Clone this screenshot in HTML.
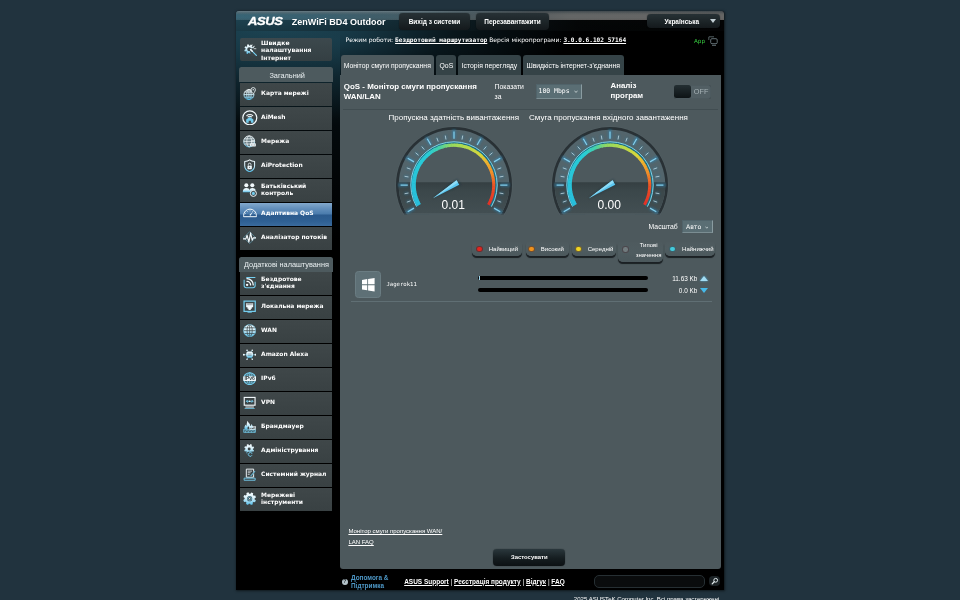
<!DOCTYPE html>
<html lang="uk"><head><meta charset="utf-8"><title>ASUS Wireless Router ZenWiFi BD4 Outdoor - Монітор смуги пропускання</title>
<style>
html,body{margin:0;padding:0;}
body{width:960px;height:600px;overflow:hidden;background:#21333e;position:relative;font-family:"Liberation Sans",sans-serif;color:#fff;}
*{box-sizing:border-box;}
.abs{position:absolute;}
#shadow{position:absolute;left:236px;top:11px;width:488px;height:578.5px;border-radius:3px 3px 0 0;box-shadow:0.6px 0.8px 2.5px rgba(0,0,0,.55);}
#wrap{will-change:transform;position:absolute;left:236px;top:11px;width:488px;height:578.5px;background:#000;border-radius:3px 3px 0 0;overflow:hidden;}
#glow{position:absolute;left:0;top:0;width:488px;height:200px;background:radial-gradient(ellipse 300px 95px at 40px 14px,rgba(34,80,98,.95) 0%,rgba(27,66,82,.8) 30%,rgba(17,44,55,.5) 60%,rgba(0,0,0,0) 100%);}
#glow2{position:absolute;left:0;top:0;width:104px;height:230px;background:linear-gradient(180deg,rgba(26,62,76,.0) 0%,rgba(26,62,76,.75) 12%,rgba(20,50,62,.55) 28%,rgba(12,32,40,.3) 50%,rgba(0,0,0,0) 100%);}
#hdr{position:absolute;left:0;top:0;width:488px;height:20px;background:linear-gradient(90deg,rgba(40,90,109,.97) 0%,rgba(33,76,93,.94) 20%,rgba(24,54,66,.92) 38%,rgba(12,24,29,.95) 55%,#06090a 70%,#040506 100%);}
#gloss{position:absolute;left:0;top:0;width:488px;height:9.2px;background:linear-gradient(90deg,rgba(130,150,158,.18) 0%,rgba(130,150,158,.26) 18%,rgba(125,142,148,.40) 32%,rgba(110,118,121,.7) 55%,rgba(108,110,110,.92) 68%,rgba(106,106,105,.95) 100%);}
#gloss2{position:absolute;left:0;top:0;width:488px;height:20px;background:linear-gradient(180deg,rgba(40,54,62,.6) 0%,rgba(40,54,62,.15) 12%,rgba(0,0,0,0) 20%,rgba(0,0,0,0) 34%,rgba(50,30,20,.12) 46%,rgba(0,0,0,.28) 46.5%,rgba(0,0,0,.36) 100%);}
#hdrtop{position:absolute;left:0;top:0;width:300px;height:3.5px;background:linear-gradient(180deg,rgba(120,138,146,.8) 0%,rgba(100,120,128,.5) 45%,rgba(40,60,70,0) 100%);-webkit-mask-image:linear-gradient(90deg,#000 0%,#000 60%,transparent 100%);}
.tbtn{position:absolute;top:2.2px;height:16.8px;border-radius:4px;background:linear-gradient(180deg,#273135 0%,#1c2427 55%,#14191c 100%);box-shadow:0 0 1px rgba(0,0,0,.8);font-weight:bold;font-size:6.47px;line-height:18.2px;text-align:center;color:#fff;white-space:nowrap;}
.menuhead{position:absolute;left:3px;width:94px;background:#4d5a5e;border-radius:2.5px 2.5px 0 0;color:#e9eff1;font-size:7.3px;text-align:center;white-space:nowrap;}
.mitem{position:absolute;left:3.7px;width:92.4px;height:22.9px;background:linear-gradient(180deg,#3f4749 0%,#394143 100%);font-family:"DejaVu Sans","Liberation Sans",sans-serif;font-weight:bold;font-size:5.95px;line-height:7.3px;color:#fff;display:flex;align-items:center;padding-left:21.4px;padding-bottom:2.6px;white-space:nowrap;}
.mitem.sel{background:linear-gradient(180deg,#83a9cd 0%,#6591bd 22%,#4a7bac 48%,#2b5a8d 52%,#2f6093 80%,#3a6b9e 100%);}
.mitem svg.mi{position:absolute;}
.tab{position:absolute;top:43.7px;height:20.3px;background:#354347;border-radius:3px 3px 0 0;font-size:6.83px;line-height:21.3px;text-align:center;color:#fff;white-space:nowrap;}
.tab.on{background:#4d595d;}
#panel{position:absolute;left:104.2px;top:63.8px;width:381.3px;height:493.8px;background:#4d595d;border-radius:0 0 3px 3px;}
.gauge{position:absolute;}
.gt{position:absolute;font-size:8px;color:#fff;white-space:nowrap;text-align:center;}
.sel{}
.sbox{position:absolute;background:#5a6e74;border-right:0.8px solid #8a9ca1;border-bottom:0.8px solid #7b8d92;border-top:0.5px solid #50636a;border-left:0.5px solid #50636a;color:#fff;white-space:nowrap;}
.chev{position:absolute;}
.lg{position:absolute;height:14.2px;border-radius:3px 3px 5px 5px;background:linear-gradient(180deg,#4e5a5e 0%,#4f5c60 50%,#4b585c 100%);box-shadow:0 1.6px 0.8px -0.4px rgba(24,30,33,.95);font-size:6px;line-height:14.6px;color:#fff;white-space:nowrap;}
.lg i{position:absolute;left:4px;top:4.1px;width:6.6px;height:6.6px;margin-left:-0.2px;border-radius:50%;border:0.5px solid rgba(60,50,55,.7);}
.lg span{position:absolute;top:0;}
a{color:#fff;text-decoration:underline;text-decoration-thickness:0.5px;text-underline-offset:0.5px;}
.mono{font-family:"DejaVu Sans Mono","Liberation Mono",monospace;}
.dv{font-family:"DejaVu Sans","Liberation Sans",sans-serif;}
</style></head><body>
<svg width="0" height="0" style="position:absolute"><defs><linearGradient id="ig" x1="0" y1="0" x2="0" y2="1"><stop offset="0" stop-color="#f6fcfe"/><stop offset="0.45" stop-color="#d8f0f9"/><stop offset="1" stop-color="#55bde8"/></linearGradient></defs></svg>
<div id="shadow"></div>
<div id="wrap">
<div id="glow"></div><div id="glow2"></div>
<div id="hdr"></div><div id="gloss"></div><div id="gloss2"></div><div id="hdrtop"></div>

<div class="abs" style="left:12.4px;top:5.2px;font-weight:bold;font-style:italic;font-size:10.4px;letter-spacing:-0.35px;line-height:10px;color:#fff;-webkit-text-stroke:0.3px #fff;transform:scale(1.255,1.1);transform-origin:left top">ASUS</div>
<div class="abs" style="left:55.8px;top:5.7px;font-weight:bold;font-size:9.04px;line-height:11px;white-space:nowrap;color:#fff">ZenWiFi BD4 Outdoor</div>
<div class="tbtn" style="left:162.8px;width:71.4px">Вихід з системи</div>
<div class="tbtn" style="left:239.8px;width:73.4px">Перезавантажити</div>
<div class="tbtn" style="left:410.8px;top:3.4px;height:14px;line-height:15.8px;width:73.4px;text-align:left;padding-left:17.6px">Українська<span style="position:absolute;right:3.8px;top:5px;width:0;height:0;border-left:3.4px solid transparent;border-right:3.4px solid transparent;border-top:4.2px solid #c3d0d5"></span></div>
<div class="mitem" style="top:26.8px;height:23.2px;border-radius:2px;font-size:6px;line-height:7.4px;padding-top:1.2px;padding-bottom:0;background:linear-gradient(180deg,rgba(62,73,77,.95),rgba(54,64,67,.95))"><svg class="mi" style="left:3.95px;top:5.55px" width="13.3" height="13.3" viewBox="0 0 28 28"><path d="M18.35,14.49 L21.00,16.20 L19.42,19.27 L16.49,18.11 L15.14,19.25 L15.81,22.34 L12.52,23.39 L11.27,20.50 L9.51,20.35 L7.80,23.00 L4.73,21.42 L5.89,18.49 L4.75,17.14 L1.66,17.81 L0.61,14.52 L3.50,13.27 L3.65,11.51 L1.00,9.80 L2.58,6.73 L5.51,7.89 L6.86,6.75 L6.19,3.66 L9.48,2.61 L10.73,5.50 L12.49,5.65 L14.20,3.00 L17.27,4.58 L16.11,7.51 L17.25,8.86 L20.34,8.19 L21.39,11.48 L18.50,12.73Z M6.80,13.00 a4.2,4.2 0 1 0 8.4,0 a4.2,4.2 0 1 0 -8.4,0Z" fill="url(#ig)" fill-rule="evenodd"/><polygon points="12,12 28,9 28,28 14,28" fill="#3b4548"/><line x1="14" y1="14" x2="26" y2="26" stroke="#74cdee" stroke-width="2.6" stroke-linecap="round"/><line x1="14" y1="14" x2="17.5" y2="17.5" stroke="#f2f9fc" stroke-width="3.2" stroke-linecap="round"/><path d="M19,8 l3,-1 M21,12 l4,0 M16,6.5 l1,-2.5" stroke="#f2f9fc" stroke-width="1.5" stroke-linecap="round"/></svg>Швидке<br>налаштування<br>Інтернет</div>
<div class="menuhead" style="top:56.2px;height:15.2px;line-height:18px;font-size:7.36px;padding-left:2.4px">Загальний</div>
<div class="mitem" style="top:71.7px"><svg class="mi" style="left:3.45px;top:3.85px" width="13.3" height="13.3" viewBox="0 0 28 28"><g fill="none" stroke="url(#ig)" stroke-width="1.9"><circle cx="12.5" cy="16" r="10.5"/><ellipse cx="12.5" cy="16" rx="4.6" ry="10.5"/><path d="M2,16 H23 M3.6,10.6 H21.4 M3.6,21.4 H21.4 M12.5,5.5 V26.5"/></g><path d="M21.5,1.2 a4.6,4.6 0 0 1 4.6,4.6 c0,3.4 -4.6,8.4 -4.6,8.4 c0,0 -4.6,-5 -4.6,-8.4 a4.6,4.6 0 0 1 4.6,-4.6Z" fill="#3b4548" stroke="#f2f9fc" stroke-width="1.8"/><circle cx="21.5" cy="5.8" r="1.4" fill="#f2f9fc"/></svg>Карта мережі</div>
<div class="mitem" style="top:95.7px"><svg class="mi" style="left:2.30px;top:3.20px" width="15.6" height="15.6" viewBox="0 0 28 28"><circle cx="14" cy="14" r="12.6" fill="none" stroke="#f2f9fc" stroke-width="2.2"/><path d="M7.5,23 V17 L14,12.5 L20.5,17 V23 H16 V19.5 H12 V23Z" fill="#74cdee"/><path d="M8.6,10.2 a7.6,7.6 0 0 1 10.8,0 M10.8,12.4 a4.5,4.5 0 0 1 6.4,0" fill="none" stroke="#f2f9fc" stroke-width="1.8" stroke-linecap="round"/></svg>AiMesh</div>
<div class="mitem" style="top:119.7px"><svg class="mi" style="left:3.45px;top:4.35px" width="13.3" height="13.3" viewBox="0 0 28 28"><circle cx="13" cy="13.5" r="11.6" fill="#bfe6f5" fill-opacity="0.35" stroke="url(#ig)" stroke-width="1.9"/><g fill="none" stroke="#f2f9fc" stroke-width="1.5"><ellipse cx="13" cy="13.5" rx="5" ry="11.6"/><path d="M1.6,13.5 H24.4 M3.2,8 H22.8 M3.2,19 H22.8"/></g><rect x="15" y="17.5" width="12" height="6.5" rx="1.2" fill="#f2f9fc"/><path d="M21,16.6 V12.2 M17.4,13 a5,5 0 0 1 7.2,0" stroke="#f2f9fc" stroke-width="1.5" fill="none"/><circle cx="18" cy="20.8" r="1" fill="#3b4548"/><circle cx="21" cy="20.8" r="1" fill="#3b4548"/><circle cx="24" cy="20.8" r="1" fill="#3b4548"/></svg>Мережа</div>
<div class="mitem" style="top:143.7px"><svg class="mi" style="left:3.45px;top:4.35px" width="13.3" height="13.3" viewBox="0 0 28 28"><path d="M14,1.8 C17,4.2 20.5,5.2 24.4,5.4 V14 C24.4,20.4 19.8,24.6 14,27 C8.2,24.6 3.6,20.4 3.6,14 V5.4 C7.5,5.2 11,4.2 14,1.8Z" fill="none" stroke="url(#ig)" stroke-width="2.2" stroke-linejoin="round"/><rect x="9.4" y="14" width="9.2" height="7.6" rx="1" fill="#f2f9fc"/><path d="M11.2,14 V11.6 a2.8,2.8 0 0 1 5.6,0 V14" fill="none" stroke="#f2f9fc" stroke-width="1.8"/><circle cx="14" cy="17.4" r="1.2" fill="#3b4548"/></svg>AiProtection</div>
<div class="mitem" style="top:167.7px"><svg class="mi" style="left:2.20px;top:3.60px" width="15.2" height="15.2" viewBox="0 0 28 28"><circle cx="8" cy="6.2" r="3.7" fill="#f2f9fc"/><circle cx="19" cy="6.2" r="3.7" fill="#f2f9fc"/><path d="M1.4,19 C1.4,13.5 4.2,11.2 8,11.2 C11.8,11.2 13.5,13 13.5,15 C14.5,12.6 16.4,11.2 19,11.2 C22,11.2 24.4,12.6 25.4,15 L17,19Z" fill="url(#ig)"/><circle cx="21" cy="21" r="5.6" fill="#3b4548" stroke="#f2f9fc" stroke-width="1.8"/><circle cx="21" cy="21" r="2.8" fill="#74cdee"/></svg>Батьківський<br>контроль</div>
<div class="mitem sel" style="top:191.7px"><svg class="mi" style="left:3.10px;top:2.30px" width="14" height="14" viewBox="0 0 28 28"><path d="M1.2,23.4 V21 A12.8,12.8 0 0 1 26.8,21 V23.4Z" fill="none" stroke="#f2f9fc" stroke-width="2" stroke-linejoin="round"/><path d="M6.0,17.4 L4.3,16.4 M9.4,14.0 L8.4,12.3 M14.0,12.8 L14.0,10.8 M18.6,14.0 L19.6,12.3 M22.0,17.4 L23.7,16.4 " stroke="#f2f9fc" stroke-width="1.3"/><path d="M12.6,20.2 L19.6,13.4 L15.2,21.6Z" fill="#f2f9fc"/></svg>Адаптивна QoS</div>
<div class="mitem" style="top:215.7px"><svg class="mi" style="left:3.45px;top:4.35px" width="13.3" height="13.3" viewBox="0 0 28 28"><path d="M14,1.5 L26.5,14 L14,26.5 L1.5,14Z" fill="none" stroke="#74cdee" stroke-width="1.5" stroke-opacity="0.6"/><polyline points="0.5,16.5 6,16.5 8.6,9 12.4,23.5 16,4 19.4,19.5 21.6,14.5 27.5,14.5" fill="none" stroke="#f2f9fc" stroke-width="2.4" stroke-linejoin="round" stroke-linecap="round"/></svg>Аналізатор потоків</div>
<div class="menuhead" style="top:245.6px;height:15px;line-height:16.6px;font-size:7.34px;padding-left:1px">Додаткові налаштування</div>
<div class="mitem" style="top:260.7px"><svg class="mi" style="left:3.45px;top:4.35px" width="13.3" height="13.3" viewBox="0 0 28 28"><path d="M7,3 H26 M2.4,8 V20 A4.6,4.6 0 0 0 7,24.6 H21 A4.6,4.6 0 0 0 25.6,20 V12" fill="none" stroke="#74cdee" stroke-width="2.2"/><circle cx="8.6" cy="18.6" r="2.5" fill="#f2f9fc"/><path d="M8.4,11.2 a7.6,7.6 0 0 1 7.6,7.6 M8.4,5.6 a13.2,13.2 0 0 1 13.2,13.2" fill="none" stroke="#f2f9fc" stroke-width="2.8" stroke-linecap="round"/></svg>Бездротове<br>з'єднання</div>
<div class="mitem" style="top:284.7px"><svg class="mi" style="left:3.45px;top:4.35px" width="13.3" height="13.3" viewBox="0 0 28 28"><rect x="2.2" y="2.4" width="23.6" height="21.6" fill="none" stroke="#74cdee" stroke-width="2.6"/><path d="M6.6,7 H21.4 V15.4 H18.6 V18.4 H16.4 V21 H11.6 V18.4 H9.4 V15.4 H6.6Z" fill="#f2f9fc"/><path d="M9,7 V11 M11.5,7 V11 M14,7 V11 M16.5,7 V11 M19,7 V11" stroke="#3b4548" stroke-width="1"/><path d="M9.5,26.8 H18.5" stroke="#74cdee" stroke-width="1.8"/></svg>Локальна мережа</div>
<div class="mitem" style="top:308.7px"><svg class="mi" style="left:3.45px;top:4.35px" width="13.3" height="13.3" viewBox="0 0 28 28"><circle cx="14" cy="14" r="12.8" fill="url(#ig)"/><g fill="none" stroke="#3b4548" stroke-width="1.5"><ellipse cx="14" cy="14" rx="5.4" ry="12.8"/><path d="M1,14 H27 M2.6,8 H25.4 M2.6,20 H25.4 M14,1 V27"/></g><circle cx="14" cy="14" r="12.8" fill="none" stroke="#74cdee" stroke-width="1.2"/></svg>WAN</div>
<div class="mitem" style="top:332.7px"><svg class="mi" style="left:3.45px;top:4.35px" width="13.3" height="13.3" viewBox="0 0 28 28"><line x1="14" y1="14" x2="26.2" y2="14.0" stroke="#74cdee" stroke-width="1.1"/><circle cx="26.2" cy="14.0" r="2.1" fill="#f2f9fc"/><line x1="14" y1="14" x2="19.5" y2="23.5" stroke="#74cdee" stroke-width="1.1"/><circle cx="19.5" cy="23.5" r="1.6" fill="#f2f9fc"/><line x1="14" y1="14" x2="8.5" y2="23.5" stroke="#74cdee" stroke-width="1.1"/><circle cx="8.5" cy="23.5" r="1.6" fill="#f2f9fc"/><line x1="14" y1="14" x2="1.8" y2="14.0" stroke="#74cdee" stroke-width="1.1"/><circle cx="1.8" cy="14.0" r="2.1" fill="#f2f9fc"/><line x1="14" y1="14" x2="8.5" y2="4.5" stroke="#74cdee" stroke-width="1.1"/><circle cx="8.5" cy="4.5" r="1.6" fill="#f2f9fc"/><line x1="14" y1="14" x2="19.5" y2="4.5" stroke="#74cdee" stroke-width="1.1"/><circle cx="19.5" cy="4.5" r="1.6" fill="#f2f9fc"/><rect x="6.8" y="7.6" width="14.4" height="12.8" rx="4.4" fill="url(#ig)"/><path d="M10,12.6 h8 M10,15.6 h8" stroke="#3b4548" stroke-width="1.2" stroke-opacity="0.7"/></svg>Amazon Alexa</div>
<div class="mitem" style="top:356.7px"><svg class="mi" style="left:3.45px;top:4.35px" width="13.3" height="13.3" viewBox="0 0 28 28"><circle cx="14" cy="14" r="12.6" fill="none" stroke="#74cdee" stroke-width="2.2"/><g fill="none" stroke="#74cdee" stroke-width="1.5"><ellipse cx="14" cy="14" rx="5.6" ry="12.6"/><path d="M3,6.6 H25 M3,21.4 H25 M14,1.4 V26.6"/></g><rect x="0.6" y="9" width="26.8" height="10" rx="1.4" fill="#f2f9fc"/><text x="14" y="17.3" text-anchor="middle" font-family="Liberation Sans, sans-serif" font-weight="bold" font-size="9.6" fill="#3b4548" textLength="22" lengthAdjust="spacingAndGlyphs">IPv6</text></svg>IPv6</div>
<div class="mitem" style="top:380.7px"><svg class="mi" style="left:3.45px;top:4.35px" width="13.3" height="13.3" viewBox="0 0 28 28"><rect x="2.6" y="3" width="22.8" height="16.4" fill="none" stroke="#f2f9fc" stroke-width="2.4"/><path d="M7,11.2 H21 M9.8,8.4 L7,11.2 L9.8,14 M18.2,8.4 L21,11.2 L18.2,14" fill="none" stroke="#74cdee" stroke-width="1.9"/><circle cx="14" cy="11.2" r="1.5" fill="#f2f9fc"/><path d="M5,23.2 H23" stroke="#f2f9fc" stroke-width="2"/><path d="M3.4,26.6 H24.6" stroke="#74cdee" stroke-width="1.8"/></svg>VPN</div>
<div class="mitem" style="top:404.7px"><svg class="mi" style="left:3.45px;top:4.35px" width="13.3" height="13.3" viewBox="0 0 28 28"><path d="M9.5,1.5 C11,6 15.6,7.6 15.4,13 C17,11.8 17.6,10.2 17.4,8.4 C20.6,11.4 21.4,15 20,18.4 L3.6,19.5 C2,14.6 4,11.4 6.4,9.4 C6.6,11 7,11.8 8,12.4 C7.4,8.4 8.4,4.6 9.5,1.5Z" fill="url(#ig)"/><path d="M9.6,19 C8.8,16.4 10.2,14.6 11.6,13.4 C12.4,15.4 14.4,16.2 13.6,19Z" fill="#3b4548"/><rect x="13.6" y="16.6" width="13.4" height="9.8" fill="#3b4548"/><g fill="none" stroke="#74cdee" stroke-width="1.4"><rect x="1.6" y="19.6" width="25" height="6.8"/><path d="M1.6,23 H26.6 M8,19.6 V23 M14.4,19.6 V23 M20.8,19.6 V23 M5,23 V26.4 M11.2,23 V26.4 M17.6,23 V26.4 M23.6,23 V26.4"/></g><g fill="none" stroke="#f2f9fc" stroke-width="1.3"><rect x="14.4" y="13.4" width="12.2" height="6.2"/><path d="M20.4,13.4 V16.4 M14.4,16.4 H26.6 M17.4,16.4 V19.6 M23.6,16.4 V19.6"/></g></svg>Брандмауер</div>
<div class="mitem" style="top:428.7px"><svg class="mi" style="left:3.45px;top:4.35px" width="13.3" height="13.3" viewBox="0 0 28 28"><path d="M20.81,11.68 L23.24,13.22 L21.81,16.40 L19.04,15.59 L17.69,16.86 L18.32,19.67 L15.06,20.90 L13.68,18.37 L11.82,18.31 L10.28,20.74 L7.10,19.31 L7.91,16.54 L6.64,15.19 L3.83,15.82 L2.60,12.56 L5.13,11.18 L5.19,9.32 L2.76,7.78 L4.19,4.60 L6.96,5.41 L8.31,4.14 L7.68,1.33 L10.94,0.10 L12.32,2.63 L14.18,2.69 L15.72,0.26 L18.90,1.69 L18.09,4.46 L19.36,5.81 L22.17,5.18 L23.40,8.44 L20.87,9.82Z M9.90,10.50 a3.1,3.1 0 1 0 6.2,0 a3.1,3.1 0 1 0 -6.2,0Z" fill="url(#ig)" fill-rule="evenodd"/><rect x="9" y="16.4" width="11.4" height="10.6" rx="1.6" fill="#3b4548"/><path d="M18.4,19.4 a4,4 0 1 0 0.6,4.2" fill="none" stroke="#74cdee" stroke-width="1.9"/><path d="M16.6,18.2 h3 v3Z" fill="#74cdee"/></svg>Адміністрування</div>
<div class="mitem" style="top:452.7px"><svg class="mi" style="left:3.45px;top:4.35px" width="13.3" height="13.3" viewBox="0 0 28 28"><path d="M7,2.4 H22.4 V19.4 H7Z" fill="none" stroke="#f2f9fc" stroke-width="2"/><path d="M10,6.6 H19 M10,10 H16 M10,13.4 H14" stroke="#f2f9fc" stroke-width="1.5"/><path d="M24.4,5.6 L15.6,15.6 L14.6,18.6 L17.6,17.4 L26.4,7.4Z" fill="#74cdee" stroke="#3b4548" stroke-width="0.8"/><path d="M2.4,21.4 H25.6 V25.8 H2.4Z" fill="none" stroke="#74cdee" stroke-width="1.9"/></svg>Системний журнал</div>
<div class="mitem" style="top:476.7px"><svg class="mi" style="left:3.45px;top:4.35px" width="13.3" height="13.3" viewBox="0 0 28 28"><path d="M24.48,15.58 L27.14,17.50 L25.30,21.56 L22.11,20.83 L20.29,22.53 L20.82,25.77 L16.64,27.34 L14.91,24.56 L12.42,24.48 L10.50,27.14 L6.44,25.30 L7.17,22.11 L5.47,20.29 L2.23,20.82 L0.66,16.64 L3.44,14.91 L3.52,12.42 L0.86,10.50 L2.70,6.44 L5.89,7.17 L7.71,5.47 L7.18,2.23 L11.36,0.66 L13.09,3.44 L15.58,3.52 L17.50,0.86 L21.56,2.70 L20.83,5.89 L22.53,7.71 L25.77,7.18 L27.34,11.36 L24.56,13.09Z M8.60,14.00 a5.4,5.4 0 1 0 10.8,0 a5.4,5.4 0 1 0 -10.8,0Z" fill="url(#ig)" fill-rule="evenodd"/><circle cx="14" cy="14" r="3.9" fill="none" stroke="#74cdee" stroke-width="1.5"/><path d="M12.8,12 L16.2,14 L12.8,16Z" fill="#f2f9fc"/></svg>Мережеві<br>інструменти</div>
<div class="abs dv" style="left:109.6px;top:25px;font-size:6.04px;line-height:8px;white-space:nowrap;color:#fff">Режим роботи: <a class="mono" style="font-weight:bold;font-size:6.13px">Бездротовий маршрутизатор</a> Версія мікропрограми: <a class="mono" style="font-weight:bold;font-size:6.13px">3.0.0.6.102_57164</a></div>
<div class="abs dv" style="left:458px;top:26.2px;font-size:5.6px;line-height:8px;color:#38cf41">App</div>
<svg class="abs" style="left:472px;top:24.6px" width="10" height="10" viewBox="0 0 20 20"><path d="M2,1.6 H12" stroke="#75868c" stroke-width="1.4" fill="none"/><path d="M1.6,1.6 V8" stroke="#75868c" stroke-width="1.4"/><rect x="5.4" y="5.4" width="13" height="10" rx="2.4" fill="none" stroke="#82939a" stroke-width="1.5"/><path d="M8,18.6 H16" stroke="#82939a" stroke-width="1.5"/></svg>
<div class="tab on" style="left:104.6px;width:93.4px">Монітор смуги пропускання</div>
<div class="tab" style="left:200.4px;width:20px">QoS</div>
<div class="tab" style="left:222.4px;width:62.2px">Історія перегляду</div>
<div class="tab" style="left:286.8px;width:100.8px">Швидкість інтернет-з'єднання</div>
<div id="panel"></div>
<div class="abs" style="left:107.8px;top:70.5px;font-weight:bold;font-size:7.94px;line-height:10.5px;color:#fff;white-space:nowrap">QoS - Монітор смуги пропускання<br>WAN/LAN</div>
<div class="abs" style="left:258.6px;top:70.6px;font-size:6.85px;line-height:10px;color:#fff">Показати<br>за</div>
<div class="sbox mono" style="left:300px;top:72.6px;width:45.6px;height:15px;font-size:6.44px;line-height:13.6px;padding-left:1.6px">100 Mbps<svg class="chev" style="right:2.6px;top:5.6px" width="4" height="3.4" viewBox="0 0 8 6"><path d="M1,1 L4,4.6 L7,1" fill="none" stroke="#dfe8ea" stroke-width="1.4"/></svg></div>
<div class="abs" style="left:374.6px;top:69.75px;font-weight:bold;font-size:7.85px;line-height:10.3px;color:#fff">Аналіз<br>програм</div>
<div class="abs" style="left:437.6px;top:73.6px;width:37px;height:14px;border-radius:2.5px;background:#525f64;box-shadow:inset 0 0 1px #2a3437"><div style="position:absolute;left:0.6px;top:0.6px;width:17px;height:12.8px;border-radius:2.5px;background:linear-gradient(180deg,#242f33,#0d1315)"></div><span style="position:absolute;left:20.2px;top:0;font-size:7.3px;line-height:14.4px;color:#a6b2b6">OFF</span></div>
<div class="abs" style="left:107px;top:98px;width:375px;height:0.7px;background:#414d51"></div>
<div class="gt" style="left:152.5px;top:102.4px;width:130px;line-height:10px">Пропускна здатність вивантаження</div>
<div class="gt" style="left:292.5px;top:102.4px;width:160px;line-height:10px">Смуга пропускання вхідного завантаження</div>
<svg class="gauge" style="left:155.75px;top:111.50px" width="124" height="94" viewBox="0 0 124 94">
<defs><clipPath id="gca"><rect x="0" y="0" width="124" height="91.4"/></clipPath><clipPath id="gla"><rect x="0" y="59.2" width="124" height="32.2"/></clipPath><linearGradient id="gba" x1="0" y1="59.2" x2="0" y2="91.4" gradientUnits="userSpaceOnUse"><stop offset="0" stop-color="#353f42"/><stop offset="0.25" stop-color="#3b474a"/><stop offset="1" stop-color="#434f53"/></linearGradient><filter id="gfa" x="-20%" y="-20%" width="140%" height="140%"><feGaussianBlur stdDeviation="0.9"/></filter></defs>
<g clip-path="url(#gca)">
<circle cx="62" cy="62" r="58.8" fill="#566368" fill-opacity="0.5"/>
<circle cx="62" cy="62" r="58.0" fill="#293135"/>
<circle cx="62" cy="62" r="55.3" fill="#53656c"/>
<circle cx="62" cy="62" r="38.5" fill="#4d595d"/>
<g clip-path="url(#gla)"><circle cx="62" cy="62" r="55.3" fill="url(#gba)"/></g>
<rect x="11" y="90.7" width="102" height="0.7" fill="#6d7b80" fill-opacity="0.7"/>
<g filter="url(#gfa)"><line x1="21.99" y1="85.10" x2="13.94" y2="89.75" stroke="#2f86b4" stroke-width="3.2" stroke-opacity="0.6"/><line x1="18.59" y1="77.80" x2="14.83" y2="79.17" stroke="#2f7fa6" stroke-width="2.4" stroke-opacity="0.5"/><line x1="16.50" y1="70.02" x2="12.56" y2="70.72" stroke="#2f7fa6" stroke-width="2.4" stroke-opacity="0.5"/><line x1="15.80" y1="62.00" x2="6.50" y2="62.00" stroke="#2f86b4" stroke-width="3.2" stroke-opacity="0.6"/><line x1="16.50" y1="53.98" x2="12.56" y2="53.28" stroke="#2f7fa6" stroke-width="2.4" stroke-opacity="0.5"/><line x1="18.59" y1="46.20" x2="14.83" y2="44.83" stroke="#2f7fa6" stroke-width="2.4" stroke-opacity="0.5"/><line x1="21.99" y1="38.90" x2="13.94" y2="34.25" stroke="#2f86b4" stroke-width="3.2" stroke-opacity="0.6"/><line x1="26.61" y1="32.30" x2="23.54" y2="29.73" stroke="#2f7fa6" stroke-width="2.4" stroke-opacity="0.5"/><line x1="32.30" y1="26.61" x2="29.73" y2="23.54" stroke="#2f7fa6" stroke-width="2.4" stroke-opacity="0.5"/><line x1="38.90" y1="21.99" x2="34.25" y2="13.94" stroke="#2f86b4" stroke-width="3.2" stroke-opacity="0.6"/><line x1="46.20" y1="18.59" x2="44.83" y2="14.83" stroke="#2f7fa6" stroke-width="2.4" stroke-opacity="0.5"/><line x1="53.98" y1="16.50" x2="53.28" y2="12.56" stroke="#2f7fa6" stroke-width="2.4" stroke-opacity="0.5"/><line x1="62.00" y1="15.80" x2="62.00" y2="6.50" stroke="#2f86b4" stroke-width="3.2" stroke-opacity="0.6"/><line x1="70.02" y1="16.50" x2="70.72" y2="12.56" stroke="#2f7fa6" stroke-width="2.4" stroke-opacity="0.5"/><line x1="77.80" y1="18.59" x2="79.17" y2="14.83" stroke="#2f7fa6" stroke-width="2.4" stroke-opacity="0.5"/><line x1="85.10" y1="21.99" x2="89.75" y2="13.94" stroke="#2f86b4" stroke-width="3.2" stroke-opacity="0.6"/><line x1="91.70" y1="26.61" x2="94.27" y2="23.54" stroke="#2f7fa6" stroke-width="2.4" stroke-opacity="0.5"/><line x1="97.39" y1="32.30" x2="100.46" y2="29.73" stroke="#2f7fa6" stroke-width="2.4" stroke-opacity="0.5"/><line x1="102.01" y1="38.90" x2="110.06" y2="34.25" stroke="#2f86b4" stroke-width="3.2" stroke-opacity="0.6"/><line x1="105.41" y1="46.20" x2="109.17" y2="44.83" stroke="#2f7fa6" stroke-width="2.4" stroke-opacity="0.5"/><line x1="107.50" y1="53.98" x2="111.44" y2="53.28" stroke="#2f7fa6" stroke-width="2.4" stroke-opacity="0.5"/><line x1="108.20" y1="62.00" x2="117.50" y2="62.00" stroke="#2f86b4" stroke-width="3.2" stroke-opacity="0.6"/><line x1="107.50" y1="70.02" x2="111.44" y2="70.72" stroke="#2f7fa6" stroke-width="2.4" stroke-opacity="0.5"/><line x1="105.41" y1="77.80" x2="109.17" y2="79.17" stroke="#2f7fa6" stroke-width="2.4" stroke-opacity="0.5"/><line x1="102.01" y1="85.10" x2="110.06" y2="89.75" stroke="#2f86b4" stroke-width="3.2" stroke-opacity="0.6"/></g>
<line x1="21.99" y1="85.10" x2="15.75" y2="88.70" stroke="#8ad6f3" stroke-width="1.25" stroke-opacity="0.92"/><line x1="18.59" y1="77.80" x2="14.83" y2="79.17" stroke="#cfe6ee" stroke-width="0.85" stroke-opacity="0.85"/><line x1="16.50" y1="70.02" x2="12.56" y2="70.72" stroke="#cfe6ee" stroke-width="0.85" stroke-opacity="0.85"/><line x1="15.80" y1="62.00" x2="8.60" y2="62.00" stroke="#8ad6f3" stroke-width="1.25" stroke-opacity="0.92"/><line x1="16.50" y1="53.98" x2="12.56" y2="53.28" stroke="#cfe6ee" stroke-width="0.85" stroke-opacity="0.85"/><line x1="18.59" y1="46.20" x2="14.83" y2="44.83" stroke="#cfe6ee" stroke-width="0.85" stroke-opacity="0.85"/><line x1="21.99" y1="38.90" x2="15.75" y2="35.30" stroke="#8ad6f3" stroke-width="1.25" stroke-opacity="0.92"/><line x1="26.61" y1="32.30" x2="23.54" y2="29.73" stroke="#cfe6ee" stroke-width="0.85" stroke-opacity="0.85"/><line x1="32.30" y1="26.61" x2="29.73" y2="23.54" stroke="#cfe6ee" stroke-width="0.85" stroke-opacity="0.85"/><line x1="38.90" y1="21.99" x2="35.30" y2="15.75" stroke="#8ad6f3" stroke-width="1.25" stroke-opacity="0.92"/><line x1="46.20" y1="18.59" x2="44.83" y2="14.83" stroke="#cfe6ee" stroke-width="0.85" stroke-opacity="0.85"/><line x1="53.98" y1="16.50" x2="53.28" y2="12.56" stroke="#cfe6ee" stroke-width="0.85" stroke-opacity="0.85"/><line x1="62.00" y1="15.80" x2="62.00" y2="8.60" stroke="#8ad6f3" stroke-width="1.25" stroke-opacity="0.92"/><line x1="70.02" y1="16.50" x2="70.72" y2="12.56" stroke="#cfe6ee" stroke-width="0.85" stroke-opacity="0.85"/><line x1="77.80" y1="18.59" x2="79.17" y2="14.83" stroke="#cfe6ee" stroke-width="0.85" stroke-opacity="0.85"/><line x1="85.10" y1="21.99" x2="88.70" y2="15.75" stroke="#8ad6f3" stroke-width="1.25" stroke-opacity="0.92"/><line x1="91.70" y1="26.61" x2="94.27" y2="23.54" stroke="#cfe6ee" stroke-width="0.85" stroke-opacity="0.85"/><line x1="97.39" y1="32.30" x2="100.46" y2="29.73" stroke="#cfe6ee" stroke-width="0.85" stroke-opacity="0.85"/><line x1="102.01" y1="38.90" x2="108.25" y2="35.30" stroke="#8ad6f3" stroke-width="1.25" stroke-opacity="0.92"/><line x1="105.41" y1="46.20" x2="109.17" y2="44.83" stroke="#cfe6ee" stroke-width="0.85" stroke-opacity="0.85"/><line x1="107.50" y1="53.98" x2="111.44" y2="53.28" stroke="#cfe6ee" stroke-width="0.85" stroke-opacity="0.85"/><line x1="108.20" y1="62.00" x2="115.40" y2="62.00" stroke="#8ad6f3" stroke-width="1.25" stroke-opacity="0.92"/><line x1="107.50" y1="70.02" x2="111.44" y2="70.72" stroke="#cfe6ee" stroke-width="0.85" stroke-opacity="0.85"/><line x1="105.41" y1="77.80" x2="109.17" y2="79.17" stroke="#cfe6ee" stroke-width="0.85" stroke-opacity="0.85"/><line x1="102.01" y1="85.10" x2="108.25" y2="88.70" stroke="#8ad6f3" stroke-width="1.25" stroke-opacity="0.92"/>
<path d="M25.63,83.00 A42,42 0 1 1 98.37,83.00" fill="none" stroke="#1c6c82" stroke-width="3.2"/>
<path d="M24.59,83.60 A43.2,43.2 0 1 1 99.41,83.60" fill="none" stroke="#8fdcf0" stroke-width="0.9"/>
<path d="M26.97,82.22 A40.45,40.45 0 0 1 25.43,79.29" fill="none" stroke="rgb(40,190,219)" stroke-width="4.50"/>
<path d="M25.67,79.72 A40.43,40.43 0 0 1 24.34,76.68" fill="none" stroke="rgb(40,191,219)" stroke-width="4.45"/>
<path d="M24.54,77.13 A40.40,40.40 0 0 1 23.43,74.01" fill="none" stroke="rgb(40,191,219)" stroke-width="4.40"/>
<path d="M23.60,74.48 A40.38,40.38 0 0 1 22.71,71.29" fill="none" stroke="rgb(40,192,219)" stroke-width="4.35"/>
<path d="M22.85,71.76 A40.35,40.35 0 0 1 22.18,68.52" fill="none" stroke="rgb(40,193,218)" stroke-width="4.31"/>
<path d="M22.28,69.00 A40.33,40.33 0 0 1 21.84,65.73" fill="none" stroke="rgb(40,194,218)" stroke-width="4.26"/>
<path d="M21.91,66.21 A40.31,40.31 0 0 1 21.70,62.91" fill="none" stroke="rgb(40,194,218)" stroke-width="4.21"/>
<path d="M21.74,63.41 A40.29,40.29 0 0 1 21.76,60.10" fill="none" stroke="rgb(40,195,218)" stroke-width="4.17"/>
<path d="M21.76,60.59 A40.26,40.26 0 0 1 22.01,57.30" fill="none" stroke="rgb(40,196,217)" stroke-width="4.13"/>
<path d="M21.98,57.79 A40.24,40.24 0 0 1 22.46,54.53" fill="none" stroke="rgb(40,197,217)" stroke-width="4.08"/>
<path d="M22.39,55.02 A40.22,40.22 0 0 1 23.10,51.79" fill="none" stroke="rgb(40,197,217)" stroke-width="4.04"/>
<path d="M22.99,52.27 A40.20,40.20 0 0 1 23.92,49.11" fill="none" stroke="rgb(40,198,217)" stroke-width="4.00"/>
<path d="M23.79,49.58 A40.18,40.18 0 0 1 24.93,46.49" fill="none" stroke="rgb(40,199,216)" stroke-width="3.96"/>
<path d="M24.76,46.96 A40.16,40.16 0 0 1 26.12,43.96" fill="none" stroke="rgb(40,200,216)" stroke-width="3.92"/>
<path d="M25.92,44.40 A40.14,40.14 0 0 1 27.48,41.51" fill="none" stroke="rgb(40,200,216)" stroke-width="3.88"/>
<path d="M27.25,41.94 A40.12,40.12 0 0 1 29.01,39.16" fill="none" stroke="rgb(40,201,216)" stroke-width="3.84"/>
<path d="M28.75,39.57 A40.10,40.10 0 0 1 30.70,36.93" fill="none" stroke="rgb(40,202,215)" stroke-width="3.81"/>
<path d="M30.41,37.32 A40.09,40.09 0 0 1 32.54,34.82" fill="none" stroke="rgb(40,203,215)" stroke-width="3.77"/>
<path d="M32.22,35.19 A40.07,40.07 0 0 1 34.52,32.84" fill="none" stroke="rgb(40,203,215)" stroke-width="3.73"/>
<path d="M34.18,33.19 A40.05,40.05 0 0 1 36.63,31.01" fill="none" stroke="rgb(40,204,215)" stroke-width="3.70"/>
<path d="M36.27,31.33 A40.03,40.03 0 0 1 38.87,29.33" fill="none" stroke="rgb(43,205,210)" stroke-width="3.67"/>
<path d="M38.48,29.63 A40.02,40.02 0 0 1 41.21,27.81" fill="none" stroke="rgb(50,206,200)" stroke-width="3.63"/>
<path d="M40.80,28.08 A40.00,40.00 0 0 1 43.65,26.45" fill="none" stroke="rgb(56,207,190)" stroke-width="3.60"/>
<path d="M43.23,26.70 A39.99,39.99 0 0 1 46.18,25.28" fill="none" stroke="rgb(63,208,180)" stroke-width="3.57"/>
<path d="M45.74,25.49 A39.97,39.97 0 0 1 48.79,24.28" fill="none" stroke="rgb(70,210,170)" stroke-width="3.54"/>
<path d="M48.33,24.45 A39.96,39.96 0 0 1 51.46,23.46" fill="none" stroke="rgb(88,211,152)" stroke-width="3.51"/>
<path d="M50.99,23.61 A39.94,39.94 0 0 1 54.17,22.83" fill="none" stroke="rgb(107,213,134)" stroke-width="3.48"/>
<path d="M53.70,22.95 A39.93,39.93 0 0 1 56.93,22.40" fill="none" stroke="rgb(126,215,117)" stroke-width="3.45"/>
<path d="M56.45,22.48 A39.91,39.91 0 0 1 59.70,22.15" fill="none" stroke="rgb(145,217,99)" stroke-width="3.43"/>
<path d="M59.22,22.20 A39.90,39.90 0 0 1 62.49,22.10" fill="none" stroke="rgb(154,218,92)" stroke-width="3.40"/>
<path d="M62.00,22.11 A39.89,39.89 0 0 1 65.27,22.25" fill="none" stroke="rgb(159,218,89)" stroke-width="3.38"/>
<path d="M64.78,22.22 A39.88,39.88 0 0 1 68.03,22.58" fill="none" stroke="rgb(165,218,86)" stroke-width="3.35"/>
<path d="M67.55,22.52 A39.86,39.86 0 0 1 70.76,23.11" fill="none" stroke="rgb(171,219,83)" stroke-width="3.33"/>
<path d="M70.29,23.02 A39.85,39.85 0 0 1 73.45,23.83" fill="none" stroke="rgb(176,219,79)" stroke-width="3.30"/>
<path d="M72.98,23.70 A39.84,39.84 0 0 1 76.08,24.73" fill="none" stroke="rgb(182,219,76)" stroke-width="3.28"/>
<path d="M75.62,24.57 A39.83,39.83 0 0 1 78.64,25.81" fill="none" stroke="rgb(187,219,73)" stroke-width="3.26"/>
<path d="M78.20,25.62 A39.82,39.82 0 0 1 81.12,27.07" fill="none" stroke="rgb(193,218,70)" stroke-width="3.24"/>
<path d="M80.69,26.85 A39.81,39.81 0 0 1 83.51,28.50" fill="none" stroke="rgb(198,217,68)" stroke-width="3.22"/>
<path d="M83.09,28.25 A39.80,39.80 0 0 1 85.79,30.09" fill="none" stroke="rgb(204,216,65)" stroke-width="3.20"/>
<path d="M85.39,29.81 A39.79,39.79 0 0 1 87.95,31.83" fill="none" stroke="rgb(209,215,62)" stroke-width="3.18"/>
<path d="M87.57,31.52 A39.78,39.78 0 0 1 89.98,33.72" fill="none" stroke="rgb(215,215,60)" stroke-width="3.17"/>
<path d="M89.63,33.39 A39.78,39.78 0 0 1 91.88,35.75" fill="none" stroke="rgb(222,204,55)" stroke-width="3.15"/>
<path d="M91.55,35.39 A39.77,39.77 0 0 1 93.63,37.90" fill="none" stroke="rgb(230,193,50)" stroke-width="3.14"/>
<path d="M93.33,37.52 A39.76,39.76 0 0 1 95.23,40.17" fill="none" stroke="rgb(238,182,46)" stroke-width="3.12"/>
<path d="M94.96,39.77 A39.75,39.75 0 0 1 96.67,42.55" fill="none" stroke="rgb(240,173,44)" stroke-width="3.11"/>
<path d="M96.42,42.13 A39.75,39.75 0 0 1 97.93,45.01" fill="none" stroke="rgb(240,164,43)" stroke-width="3.09"/>
<path d="M97.72,44.58 A39.74,39.74 0 0 1 99.03,47.56" fill="none" stroke="rgb(241,155,42)" stroke-width="3.08"/>
<path d="M98.84,47.11 A39.74,39.74 0 0 1 99.94,50.18" fill="none" stroke="rgb(241,146,41)" stroke-width="3.07"/>
<path d="M99.79,49.72 A39.73,39.73 0 0 1 100.66,52.86" fill="none" stroke="rgb(241,137,40)" stroke-width="3.06"/>
<path d="M100.55,52.39 A39.73,39.73 0 0 1 101.20,55.58" fill="none" stroke="rgb(240,125,39)" stroke-width="3.05"/>
<path d="M101.12,55.10 A39.72,39.72 0 0 1 101.55,58.33" fill="none" stroke="rgb(239,112,39)" stroke-width="3.04"/>
<path d="M101.50,57.85 A39.72,39.72 0 0 1 101.71,61.10" fill="none" stroke="rgb(237,99,38)" stroke-width="3.03"/>
<path d="M101.69,60.61 A39.71,39.71 0 0 1 101.67,63.87" fill="none" stroke="rgb(235,86,38)" stroke-width="3.03"/>
<path d="M101.69,63.39 A39.71,39.71 0 0 1 101.44,66.63" fill="none" stroke="rgb(234,77,38)" stroke-width="3.02"/>
<path d="M101.49,66.15 A39.71,39.71 0 0 1 101.02,69.37" fill="none" stroke="rgb(233,73,38)" stroke-width="3.02"/>
<path d="M101.10,68.89 A39.71,39.71 0 0 1 100.41,72.08" fill="none" stroke="rgb(231,68,38)" stroke-width="3.01"/>
<path d="M100.52,71.61 A39.70,39.70 0 0 1 99.61,74.73" fill="none" stroke="rgb(230,64,39)" stroke-width="3.01"/>
<path d="M99.76,74.27 A39.70,39.70 0 0 1 98.63,77.32" fill="none" stroke="rgb(229,59,39)" stroke-width="3.00"/>
<path d="M98.81,76.87 A39.70,39.70 0 0 1 97.47,79.84" fill="none" stroke="rgb(227,54,39)" stroke-width="3.00"/>
<path d="M97.68,79.40 A39.70,39.70 0 0 1 96.38,81.85" fill="none" stroke="rgb(226,50,39)" stroke-width="3.00"/>
</g>
<g transform="rotate(-122 62 62)"><polygon points="58.6,67.4 65.4,67.4 62,36" fill="#22343c" fill-opacity="0.65" filter="url(#gfa)"/><polygon points="59.4,66.6 64.6,66.6 62,37.2" fill="#5cc8f2"/><polygon points="62,66.6 64.6,66.6 62,37.2" fill="#8fdcf7"/></g>
<text x="61.2" y="86.1" text-anchor="middle" font-family="Liberation Sans, sans-serif" font-size="12" fill="#fff">0.01</text>
</svg>
<svg class="gauge" style="left:311.90px;top:111.50px" width="124" height="94" viewBox="0 0 124 94">
<defs><clipPath id="gcb"><rect x="0" y="0" width="124" height="91.4"/></clipPath><clipPath id="glb"><rect x="0" y="59.2" width="124" height="32.2"/></clipPath><linearGradient id="gbb" x1="0" y1="59.2" x2="0" y2="91.4" gradientUnits="userSpaceOnUse"><stop offset="0" stop-color="#353f42"/><stop offset="0.25" stop-color="#3b474a"/><stop offset="1" stop-color="#434f53"/></linearGradient><filter id="gfb" x="-20%" y="-20%" width="140%" height="140%"><feGaussianBlur stdDeviation="0.9"/></filter></defs>
<g clip-path="url(#gcb)">
<circle cx="62" cy="62" r="58.8" fill="#566368" fill-opacity="0.5"/>
<circle cx="62" cy="62" r="58.0" fill="#293135"/>
<circle cx="62" cy="62" r="55.3" fill="#53656c"/>
<circle cx="62" cy="62" r="38.5" fill="#4d595d"/>
<g clip-path="url(#glb)"><circle cx="62" cy="62" r="55.3" fill="url(#gbb)"/></g>
<rect x="11" y="90.7" width="102" height="0.7" fill="#6d7b80" fill-opacity="0.7"/>
<g filter="url(#gfb)"><line x1="21.99" y1="85.10" x2="13.94" y2="89.75" stroke="#2f86b4" stroke-width="3.2" stroke-opacity="0.6"/><line x1="18.59" y1="77.80" x2="14.83" y2="79.17" stroke="#2f7fa6" stroke-width="2.4" stroke-opacity="0.5"/><line x1="16.50" y1="70.02" x2="12.56" y2="70.72" stroke="#2f7fa6" stroke-width="2.4" stroke-opacity="0.5"/><line x1="15.80" y1="62.00" x2="6.50" y2="62.00" stroke="#2f86b4" stroke-width="3.2" stroke-opacity="0.6"/><line x1="16.50" y1="53.98" x2="12.56" y2="53.28" stroke="#2f7fa6" stroke-width="2.4" stroke-opacity="0.5"/><line x1="18.59" y1="46.20" x2="14.83" y2="44.83" stroke="#2f7fa6" stroke-width="2.4" stroke-opacity="0.5"/><line x1="21.99" y1="38.90" x2="13.94" y2="34.25" stroke="#2f86b4" stroke-width="3.2" stroke-opacity="0.6"/><line x1="26.61" y1="32.30" x2="23.54" y2="29.73" stroke="#2f7fa6" stroke-width="2.4" stroke-opacity="0.5"/><line x1="32.30" y1="26.61" x2="29.73" y2="23.54" stroke="#2f7fa6" stroke-width="2.4" stroke-opacity="0.5"/><line x1="38.90" y1="21.99" x2="34.25" y2="13.94" stroke="#2f86b4" stroke-width="3.2" stroke-opacity="0.6"/><line x1="46.20" y1="18.59" x2="44.83" y2="14.83" stroke="#2f7fa6" stroke-width="2.4" stroke-opacity="0.5"/><line x1="53.98" y1="16.50" x2="53.28" y2="12.56" stroke="#2f7fa6" stroke-width="2.4" stroke-opacity="0.5"/><line x1="62.00" y1="15.80" x2="62.00" y2="6.50" stroke="#2f86b4" stroke-width="3.2" stroke-opacity="0.6"/><line x1="70.02" y1="16.50" x2="70.72" y2="12.56" stroke="#2f7fa6" stroke-width="2.4" stroke-opacity="0.5"/><line x1="77.80" y1="18.59" x2="79.17" y2="14.83" stroke="#2f7fa6" stroke-width="2.4" stroke-opacity="0.5"/><line x1="85.10" y1="21.99" x2="89.75" y2="13.94" stroke="#2f86b4" stroke-width="3.2" stroke-opacity="0.6"/><line x1="91.70" y1="26.61" x2="94.27" y2="23.54" stroke="#2f7fa6" stroke-width="2.4" stroke-opacity="0.5"/><line x1="97.39" y1="32.30" x2="100.46" y2="29.73" stroke="#2f7fa6" stroke-width="2.4" stroke-opacity="0.5"/><line x1="102.01" y1="38.90" x2="110.06" y2="34.25" stroke="#2f86b4" stroke-width="3.2" stroke-opacity="0.6"/><line x1="105.41" y1="46.20" x2="109.17" y2="44.83" stroke="#2f7fa6" stroke-width="2.4" stroke-opacity="0.5"/><line x1="107.50" y1="53.98" x2="111.44" y2="53.28" stroke="#2f7fa6" stroke-width="2.4" stroke-opacity="0.5"/><line x1="108.20" y1="62.00" x2="117.50" y2="62.00" stroke="#2f86b4" stroke-width="3.2" stroke-opacity="0.6"/><line x1="107.50" y1="70.02" x2="111.44" y2="70.72" stroke="#2f7fa6" stroke-width="2.4" stroke-opacity="0.5"/><line x1="105.41" y1="77.80" x2="109.17" y2="79.17" stroke="#2f7fa6" stroke-width="2.4" stroke-opacity="0.5"/><line x1="102.01" y1="85.10" x2="110.06" y2="89.75" stroke="#2f86b4" stroke-width="3.2" stroke-opacity="0.6"/></g>
<line x1="21.99" y1="85.10" x2="15.75" y2="88.70" stroke="#8ad6f3" stroke-width="1.25" stroke-opacity="0.92"/><line x1="18.59" y1="77.80" x2="14.83" y2="79.17" stroke="#cfe6ee" stroke-width="0.85" stroke-opacity="0.85"/><line x1="16.50" y1="70.02" x2="12.56" y2="70.72" stroke="#cfe6ee" stroke-width="0.85" stroke-opacity="0.85"/><line x1="15.80" y1="62.00" x2="8.60" y2="62.00" stroke="#8ad6f3" stroke-width="1.25" stroke-opacity="0.92"/><line x1="16.50" y1="53.98" x2="12.56" y2="53.28" stroke="#cfe6ee" stroke-width="0.85" stroke-opacity="0.85"/><line x1="18.59" y1="46.20" x2="14.83" y2="44.83" stroke="#cfe6ee" stroke-width="0.85" stroke-opacity="0.85"/><line x1="21.99" y1="38.90" x2="15.75" y2="35.30" stroke="#8ad6f3" stroke-width="1.25" stroke-opacity="0.92"/><line x1="26.61" y1="32.30" x2="23.54" y2="29.73" stroke="#cfe6ee" stroke-width="0.85" stroke-opacity="0.85"/><line x1="32.30" y1="26.61" x2="29.73" y2="23.54" stroke="#cfe6ee" stroke-width="0.85" stroke-opacity="0.85"/><line x1="38.90" y1="21.99" x2="35.30" y2="15.75" stroke="#8ad6f3" stroke-width="1.25" stroke-opacity="0.92"/><line x1="46.20" y1="18.59" x2="44.83" y2="14.83" stroke="#cfe6ee" stroke-width="0.85" stroke-opacity="0.85"/><line x1="53.98" y1="16.50" x2="53.28" y2="12.56" stroke="#cfe6ee" stroke-width="0.85" stroke-opacity="0.85"/><line x1="62.00" y1="15.80" x2="62.00" y2="8.60" stroke="#8ad6f3" stroke-width="1.25" stroke-opacity="0.92"/><line x1="70.02" y1="16.50" x2="70.72" y2="12.56" stroke="#cfe6ee" stroke-width="0.85" stroke-opacity="0.85"/><line x1="77.80" y1="18.59" x2="79.17" y2="14.83" stroke="#cfe6ee" stroke-width="0.85" stroke-opacity="0.85"/><line x1="85.10" y1="21.99" x2="88.70" y2="15.75" stroke="#8ad6f3" stroke-width="1.25" stroke-opacity="0.92"/><line x1="91.70" y1="26.61" x2="94.27" y2="23.54" stroke="#cfe6ee" stroke-width="0.85" stroke-opacity="0.85"/><line x1="97.39" y1="32.30" x2="100.46" y2="29.73" stroke="#cfe6ee" stroke-width="0.85" stroke-opacity="0.85"/><line x1="102.01" y1="38.90" x2="108.25" y2="35.30" stroke="#8ad6f3" stroke-width="1.25" stroke-opacity="0.92"/><line x1="105.41" y1="46.20" x2="109.17" y2="44.83" stroke="#cfe6ee" stroke-width="0.85" stroke-opacity="0.85"/><line x1="107.50" y1="53.98" x2="111.44" y2="53.28" stroke="#cfe6ee" stroke-width="0.85" stroke-opacity="0.85"/><line x1="108.20" y1="62.00" x2="115.40" y2="62.00" stroke="#8ad6f3" stroke-width="1.25" stroke-opacity="0.92"/><line x1="107.50" y1="70.02" x2="111.44" y2="70.72" stroke="#cfe6ee" stroke-width="0.85" stroke-opacity="0.85"/><line x1="105.41" y1="77.80" x2="109.17" y2="79.17" stroke="#cfe6ee" stroke-width="0.85" stroke-opacity="0.85"/><line x1="102.01" y1="85.10" x2="108.25" y2="88.70" stroke="#8ad6f3" stroke-width="1.25" stroke-opacity="0.92"/>
<path d="M25.63,83.00 A42,42 0 1 1 98.37,83.00" fill="none" stroke="#1c6c82" stroke-width="3.2"/>
<path d="M24.59,83.60 A43.2,43.2 0 1 1 99.41,83.60" fill="none" stroke="#8fdcf0" stroke-width="0.9"/>
<path d="M26.97,82.22 A40.45,40.45 0 0 1 25.43,79.29" fill="none" stroke="rgb(40,190,219)" stroke-width="4.50"/>
<path d="M25.67,79.72 A40.43,40.43 0 0 1 24.34,76.68" fill="none" stroke="rgb(40,191,219)" stroke-width="4.45"/>
<path d="M24.54,77.13 A40.40,40.40 0 0 1 23.43,74.01" fill="none" stroke="rgb(40,191,219)" stroke-width="4.40"/>
<path d="M23.60,74.48 A40.38,40.38 0 0 1 22.71,71.29" fill="none" stroke="rgb(40,192,219)" stroke-width="4.35"/>
<path d="M22.85,71.76 A40.35,40.35 0 0 1 22.18,68.52" fill="none" stroke="rgb(40,193,218)" stroke-width="4.31"/>
<path d="M22.28,69.00 A40.33,40.33 0 0 1 21.84,65.73" fill="none" stroke="rgb(40,194,218)" stroke-width="4.26"/>
<path d="M21.91,66.21 A40.31,40.31 0 0 1 21.70,62.91" fill="none" stroke="rgb(40,194,218)" stroke-width="4.21"/>
<path d="M21.74,63.41 A40.29,40.29 0 0 1 21.76,60.10" fill="none" stroke="rgb(40,195,218)" stroke-width="4.17"/>
<path d="M21.76,60.59 A40.26,40.26 0 0 1 22.01,57.30" fill="none" stroke="rgb(40,196,217)" stroke-width="4.13"/>
<path d="M21.98,57.79 A40.24,40.24 0 0 1 22.46,54.53" fill="none" stroke="rgb(40,197,217)" stroke-width="4.08"/>
<path d="M22.39,55.02 A40.22,40.22 0 0 1 23.10,51.79" fill="none" stroke="rgb(40,197,217)" stroke-width="4.04"/>
<path d="M22.99,52.27 A40.20,40.20 0 0 1 23.92,49.11" fill="none" stroke="rgb(40,198,217)" stroke-width="4.00"/>
<path d="M23.79,49.58 A40.18,40.18 0 0 1 24.93,46.49" fill="none" stroke="rgb(40,199,216)" stroke-width="3.96"/>
<path d="M24.76,46.96 A40.16,40.16 0 0 1 26.12,43.96" fill="none" stroke="rgb(40,200,216)" stroke-width="3.92"/>
<path d="M25.92,44.40 A40.14,40.14 0 0 1 27.48,41.51" fill="none" stroke="rgb(40,200,216)" stroke-width="3.88"/>
<path d="M27.25,41.94 A40.12,40.12 0 0 1 29.01,39.16" fill="none" stroke="rgb(40,201,216)" stroke-width="3.84"/>
<path d="M28.75,39.57 A40.10,40.10 0 0 1 30.70,36.93" fill="none" stroke="rgb(40,202,215)" stroke-width="3.81"/>
<path d="M30.41,37.32 A40.09,40.09 0 0 1 32.54,34.82" fill="none" stroke="rgb(40,203,215)" stroke-width="3.77"/>
<path d="M32.22,35.19 A40.07,40.07 0 0 1 34.52,32.84" fill="none" stroke="rgb(40,203,215)" stroke-width="3.73"/>
<path d="M34.18,33.19 A40.05,40.05 0 0 1 36.63,31.01" fill="none" stroke="rgb(40,204,215)" stroke-width="3.70"/>
<path d="M36.27,31.33 A40.03,40.03 0 0 1 38.87,29.33" fill="none" stroke="rgb(43,205,210)" stroke-width="3.67"/>
<path d="M38.48,29.63 A40.02,40.02 0 0 1 41.21,27.81" fill="none" stroke="rgb(50,206,200)" stroke-width="3.63"/>
<path d="M40.80,28.08 A40.00,40.00 0 0 1 43.65,26.45" fill="none" stroke="rgb(56,207,190)" stroke-width="3.60"/>
<path d="M43.23,26.70 A39.99,39.99 0 0 1 46.18,25.28" fill="none" stroke="rgb(63,208,180)" stroke-width="3.57"/>
<path d="M45.74,25.49 A39.97,39.97 0 0 1 48.79,24.28" fill="none" stroke="rgb(70,210,170)" stroke-width="3.54"/>
<path d="M48.33,24.45 A39.96,39.96 0 0 1 51.46,23.46" fill="none" stroke="rgb(88,211,152)" stroke-width="3.51"/>
<path d="M50.99,23.61 A39.94,39.94 0 0 1 54.17,22.83" fill="none" stroke="rgb(107,213,134)" stroke-width="3.48"/>
<path d="M53.70,22.95 A39.93,39.93 0 0 1 56.93,22.40" fill="none" stroke="rgb(126,215,117)" stroke-width="3.45"/>
<path d="M56.45,22.48 A39.91,39.91 0 0 1 59.70,22.15" fill="none" stroke="rgb(145,217,99)" stroke-width="3.43"/>
<path d="M59.22,22.20 A39.90,39.90 0 0 1 62.49,22.10" fill="none" stroke="rgb(154,218,92)" stroke-width="3.40"/>
<path d="M62.00,22.11 A39.89,39.89 0 0 1 65.27,22.25" fill="none" stroke="rgb(159,218,89)" stroke-width="3.38"/>
<path d="M64.78,22.22 A39.88,39.88 0 0 1 68.03,22.58" fill="none" stroke="rgb(165,218,86)" stroke-width="3.35"/>
<path d="M67.55,22.52 A39.86,39.86 0 0 1 70.76,23.11" fill="none" stroke="rgb(171,219,83)" stroke-width="3.33"/>
<path d="M70.29,23.02 A39.85,39.85 0 0 1 73.45,23.83" fill="none" stroke="rgb(176,219,79)" stroke-width="3.30"/>
<path d="M72.98,23.70 A39.84,39.84 0 0 1 76.08,24.73" fill="none" stroke="rgb(182,219,76)" stroke-width="3.28"/>
<path d="M75.62,24.57 A39.83,39.83 0 0 1 78.64,25.81" fill="none" stroke="rgb(187,219,73)" stroke-width="3.26"/>
<path d="M78.20,25.62 A39.82,39.82 0 0 1 81.12,27.07" fill="none" stroke="rgb(193,218,70)" stroke-width="3.24"/>
<path d="M80.69,26.85 A39.81,39.81 0 0 1 83.51,28.50" fill="none" stroke="rgb(198,217,68)" stroke-width="3.22"/>
<path d="M83.09,28.25 A39.80,39.80 0 0 1 85.79,30.09" fill="none" stroke="rgb(204,216,65)" stroke-width="3.20"/>
<path d="M85.39,29.81 A39.79,39.79 0 0 1 87.95,31.83" fill="none" stroke="rgb(209,215,62)" stroke-width="3.18"/>
<path d="M87.57,31.52 A39.78,39.78 0 0 1 89.98,33.72" fill="none" stroke="rgb(215,215,60)" stroke-width="3.17"/>
<path d="M89.63,33.39 A39.78,39.78 0 0 1 91.88,35.75" fill="none" stroke="rgb(222,204,55)" stroke-width="3.15"/>
<path d="M91.55,35.39 A39.77,39.77 0 0 1 93.63,37.90" fill="none" stroke="rgb(230,193,50)" stroke-width="3.14"/>
<path d="M93.33,37.52 A39.76,39.76 0 0 1 95.23,40.17" fill="none" stroke="rgb(238,182,46)" stroke-width="3.12"/>
<path d="M94.96,39.77 A39.75,39.75 0 0 1 96.67,42.55" fill="none" stroke="rgb(240,173,44)" stroke-width="3.11"/>
<path d="M96.42,42.13 A39.75,39.75 0 0 1 97.93,45.01" fill="none" stroke="rgb(240,164,43)" stroke-width="3.09"/>
<path d="M97.72,44.58 A39.74,39.74 0 0 1 99.03,47.56" fill="none" stroke="rgb(241,155,42)" stroke-width="3.08"/>
<path d="M98.84,47.11 A39.74,39.74 0 0 1 99.94,50.18" fill="none" stroke="rgb(241,146,41)" stroke-width="3.07"/>
<path d="M99.79,49.72 A39.73,39.73 0 0 1 100.66,52.86" fill="none" stroke="rgb(241,137,40)" stroke-width="3.06"/>
<path d="M100.55,52.39 A39.73,39.73 0 0 1 101.20,55.58" fill="none" stroke="rgb(240,125,39)" stroke-width="3.05"/>
<path d="M101.12,55.10 A39.72,39.72 0 0 1 101.55,58.33" fill="none" stroke="rgb(239,112,39)" stroke-width="3.04"/>
<path d="M101.50,57.85 A39.72,39.72 0 0 1 101.71,61.10" fill="none" stroke="rgb(237,99,38)" stroke-width="3.03"/>
<path d="M101.69,60.61 A39.71,39.71 0 0 1 101.67,63.87" fill="none" stroke="rgb(235,86,38)" stroke-width="3.03"/>
<path d="M101.69,63.39 A39.71,39.71 0 0 1 101.44,66.63" fill="none" stroke="rgb(234,77,38)" stroke-width="3.02"/>
<path d="M101.49,66.15 A39.71,39.71 0 0 1 101.02,69.37" fill="none" stroke="rgb(233,73,38)" stroke-width="3.02"/>
<path d="M101.10,68.89 A39.71,39.71 0 0 1 100.41,72.08" fill="none" stroke="rgb(231,68,38)" stroke-width="3.01"/>
<path d="M100.52,71.61 A39.70,39.70 0 0 1 99.61,74.73" fill="none" stroke="rgb(230,64,39)" stroke-width="3.01"/>
<path d="M99.76,74.27 A39.70,39.70 0 0 1 98.63,77.32" fill="none" stroke="rgb(229,59,39)" stroke-width="3.00"/>
<path d="M98.81,76.87 A39.70,39.70 0 0 1 97.47,79.84" fill="none" stroke="rgb(227,54,39)" stroke-width="3.00"/>
<path d="M97.68,79.40 A39.70,39.70 0 0 1 96.38,81.85" fill="none" stroke="rgb(226,50,39)" stroke-width="3.00"/>
</g>
<g transform="rotate(-122 62 62)"><polygon points="58.6,67.4 65.4,67.4 62,36" fill="#22343c" fill-opacity="0.65" filter="url(#gfb)"/><polygon points="59.4,66.6 64.6,66.6 62,37.2" fill="#5cc8f2"/><polygon points="62,66.6 64.6,66.6 62,37.2" fill="#8fdcf7"/></g>
<text x="61.2" y="86.1" text-anchor="middle" font-family="Liberation Sans, sans-serif" font-size="12" fill="#fff">0.00</text>
</svg>
<div class="abs" style="left:412.6px;top:211px;font-size:6.82px;line-height:10px;color:#fff">Масштаб</div>
<div class="sbox dv" style="left:445.8px;top:209.2px;width:31px;height:13.2px;font-size:6.2px;line-height:12px;padding-left:3.2px">Авто<svg class="chev" style="right:3.6px;top:5.2px" width="3.6" height="3" viewBox="0 0 8 6"><path d="M1,1 L4,4.6 L7,1" fill="none" stroke="#dfe8ea" stroke-width="1.5"/></svg></div>
<div class="lg" style="left:236.1px;top:230.8px;width:50.1px"><i style="left:4.3px;background:#e1261f"></i><span style="left:16.7px">Найвищий</span></div>
<div class="lg" style="left:289.6px;top:230.8px;width:43.4px"><i style="left:3.0px;background:#f0921c"></i><span style="left:15.2px">Високий</span></div>
<div class="lg" style="left:336.4px;top:230.8px;width:43.3px"><i style="left:3.2px;background:#f1d622"></i><span style="left:15.3px">Середній</span></div>
<div class="lg" style="left:381.8px;top:230.8px;width:45.4px;height:20px;line-height:10px"><i style="left:4.7px;background:#717b7e;top:4.6px;box-shadow:none"></i><span style="left:10.8px;width:40px;text-align:center;top:-2.2px">Типові<br>значення</span></div>
<div class="lg" style="left:428.5px;top:230.8px;width:50.8px"><i style="left:4.8px;background:#43cbdc"></i><span style="left:17.6px">Найнижчий</span></div>
<div class="abs" style="left:118.7px;top:260.3px;width:26.8px;height:26.6px;border-radius:3.4px;background:#5e7076;border:0.5px solid #6a7c82"><svg style="position:absolute;left:6.6px;top:6px" width="12.6" height="13.4" preserveAspectRatio="none" viewBox="0 0 12 12"><path d="M0,1.7 L5,1 V5.6 H0Z M5.8,0.9 L12,0 V5.6 H5.8Z M0,6.4 H5 V11 L0,10.3Z M5.8,6.4 H12 V12 L5.8,11.1Z" fill="#fff"/></svg></div>
<div class="abs mono" style="left:150.4px;top:268.9px;font-size:5.63px;line-height:8px;color:#fff">Jagerok11</div>
<div class="abs" style="left:242px;top:265px;width:170px;height:4px;border-radius:2px;background:#000"><div style="position:absolute;left:0.5px;top:0.4px;width:1px;height:3.2px;background:#9fd8f0"></div></div>
<div class="abs" style="left:242px;top:277.2px;width:170px;height:4px;border-radius:2px;background:#000"></div>
<div class="abs" style="left:411.4px;top:263.6px;width:50px;text-align:right;font-size:6.41px;line-height:8px;color:#fff">11.63 Kb</div>
<div class="abs" style="left:411.4px;top:275.6px;width:50px;text-align:right;font-size:6.41px;line-height:8px;color:#fff">0.0 Kb</div>
<div class="abs" style="left:464.2px;top:264.6px;width:0;height:0;border-left:4.1px solid transparent;border-right:4.1px solid transparent;border-bottom:5.4px solid #a3dcf3;filter:drop-shadow(0 0 0.8px #4aa6d0)"></div>
<div class="abs" style="left:464.2px;top:276.8px;width:0;height:0;border-left:4.1px solid transparent;border-right:4.1px solid transparent;border-top:5.4px solid #47b9e8"></div>
<div class="abs" style="left:115px;top:290px;width:361px;height:0.7px;background:#606f74"></div>
<div class="abs" style="left:112.4px;top:514.8px;font-size:6.03px;line-height:10.9px;color:#fff;white-space:nowrap"><a>Монітор смуги пропускання WAN/<br>LAN FAQ</a></div>
<div class="abs" style="left:257.4px;top:538.2px;width:71.8px;height:16.8px;border-radius:4px;background:linear-gradient(180deg,#2a373c 0%,#151d20 55%,#0c1113 100%);box-shadow:0 0 1px rgba(0,0,0,.7);font-weight:bold;font-size:5.93px;line-height:17px;text-align:center;color:#fff">Застосувати</div>
<div class="abs" style="left:105.8px;top:567.8px;width:5.8px;height:5.8px;border-radius:50%;background:#b4c2c8;color:#10181c;font-size:4.8px;line-height:6px;text-align:center;font-weight:bold">?</div>
<div class="abs" style="left:115px;top:563.1px;font-weight:bold;font-size:6.41px;line-height:8.3px;color:#4d97c6;white-space:nowrap">Допомога &amp;<br>Підтримка</div>
<div class="abs" style="left:168.2px;top:566.6px;font-size:6.47px;line-height:8px;color:#fff;white-space:nowrap"><a style="font-weight:bold">ASUS Support</a> | <a style="font-weight:bold">Реєстрація продукту</a> | <a style="font-weight:bold">Відгук</a> | <a style="font-weight:bold">FAQ</a></div>
<div class="abs" style="left:358.4px;top:563.8px;width:110.6px;height:13.6px;border-radius:5px;background:#0a0c0d;border:0.7px solid #262f33"></div>
<div class="abs" style="left:472.8px;top:565.2px;width:11.2px;height:10.2px;border-radius:4px;background:#1c2326"><svg style="position:absolute;left:0;top:0" width="11.2" height="10.2" viewBox="0 0 11.2 10.2"><circle cx="6.7" cy="4.3" r="1.9" fill="none" stroke="#e4ecef" stroke-width="0.95"/><line x1="5.2" y1="5.8" x2="3.2" y2="7.9" stroke="#e4ecef" stroke-width="1.3" stroke-linecap="round"/></svg></div>
</div>
<div class="abs" style="will-change:transform;left:540px;top:594.9px;width:180.8px;text-align:right;font-size:6.05px;line-height:8px;color:#fff;white-space:nowrap">2025 ASUSTeK Computer Inc. Всі права застережені.</div>
</body></html>
